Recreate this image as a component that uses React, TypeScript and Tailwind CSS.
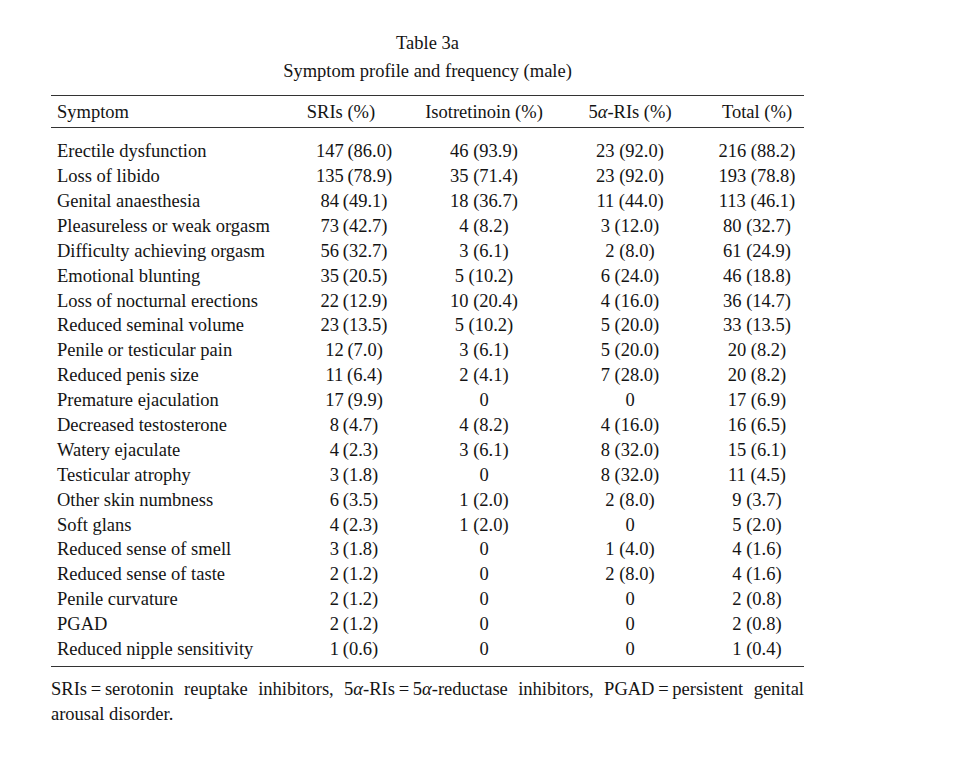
import React from 'react';

type Row = [string, string, string, string, string];

const rows: Row[] = [
  ['Erectile dysfunction', '147\u2009(86.0)', '46 (93.9)', '23 (92.0)', '216 (88.2)'],
  ['Loss of libido', '135\u2009(78.9)', '35 (71.4)', '23 (92.0)', '193 (78.8)'],
  ['Genital anaesthesia', '84\u2009(49.1)', '18 (36.7)', '11 (44.0)', '113 (46.1)'],
  ['Pleasureless or weak orgasm', '73\u2009(42.7)', '4 (8.2)', '3 (12.0)', '80 (32.7)'],
  ['Difficulty achieving orgasm', '56\u2009(32.7)', '3 (6.1)', '2 (8.0)', '61 (24.9)'],
  ['Emotional blunting', '35\u2009(20.5)', '5 (10.2)', '6 (24.0)', '46 (18.8)'],
  ['Loss of nocturnal erections', '22\u2009(12.9)', '10 (20.4)', '4 (16.0)', '36 (14.7)'],
  ['Reduced seminal volume', '23\u2009(13.5)', '5 (10.2)', '5 (20.0)', '33 (13.5)'],
  ['Penile or testicular pain', '12\u2009(7.0)', '3 (6.1)', '5 (20.0)', '20 (8.2)'],
  ['Reduced penis size', '11\u2009(6.4)', '2 (4.1)', '7 (28.0)', '20 (8.2)'],
  ['Premature ejaculation', '17\u2009(9.9)', '0', '0', '17 (6.9)'],
  ['Decreased testosterone', '8\u2009(4.7)', '4 (8.2)', '4 (16.0)', '16 (6.5)'],
  ['Watery ejaculate', '4\u2009(2.3)', '3 (6.1)', '8 (32.0)', '15 (6.1)'],
  ['Testicular atrophy', '3\u2009(1.8)', '0', '8 (32.0)', '11 (4.5)'],
  ['Other skin numbness', '6\u2009(3.5)', '1 (2.0)', '2 (8.0)', '9 (3.7)'],
  ['Soft glans', '4\u2009(2.3)', '1 (2.0)', '0', '5 (2.0)'],
  ['Reduced sense of smell', '3\u2009(1.8)', '0', '1 (4.0)', '4 (1.6)'],
  ['Reduced sense of taste', '2\u2009(1.2)', '0', '2 (8.0)', '4 (1.6)'],
  ['Penile curvature', '2\u2009(1.2)', '0', '0', '2 (0.8)'],
  ['PGAD', '2\u2009(1.2)', '0', '0', '2 (0.8)'],
  ['Reduced nipple sensitivity', '1\u2009(0.6)', '0', '0', '1 (0.4)'],
];

const cols = 'grid grid-cols-[239px_128px_132px_160px_94px]';

export default function App() {
  return (
    <div
      className="min-h-[770px] w-[967px] bg-white text-[#141414] text-[18.5px]"
      style={{ fontFamily: '"Liberation Serif", "Times New Roman", serif' }}
    >
      <div className="ml-[51px] w-[753px] pt-[29px]">
        {/* Caption */}
        <div className="text-center leading-[28px]">
          <div>Table 3a</div>
          <div>Symptom profile and frequency (male)</div>
        </div>

        {/* Header */}
        <div className="mt-[10px] border-t border-b border-[#333]">
          <div className={`${cols} h-[31px] items-center pt-[3px]`}>
            <div className="pl-[6px]">Symptom</div>
            <div className="text-center pr-[26px]">SRIs (%)</div>
            <div className="text-center">Isotretinoin (%)</div>
            <div className="text-center">
              5<i>α</i>-RIs (%)
            </div>
            <div className="text-center">Total (%)</div>
          </div>
        </div>

        {/* Body */}
        <div className="pt-[11px] pb-[4px] border-b border-[#333]">
          {rows.map((r) => (
            <div key={r[0]} className={`${cols} h-[24.9px] items-center leading-none`}>
              <div className="pl-[6px] whitespace-nowrap">{r[0]}</div>
              <div className="text-center">{r[1]}</div>
              <div className="text-center">{r[2]}</div>
              <div className="text-center">{r[3]}</div>
              <div className="text-center">{r[4]}</div>
            </div>
          ))}
        </div>

        {/* Footnote */}
        <p className="mt-[10px] text-justify leading-[25px]">
          SRIs{'\u2009'}={'\u2009'}serotonin reuptake inhibitors, 5<i>α</i>-RIs{'\u2009'}={'\u2009'}5<i>α</i>-reductase
          inhibitors, PGAD{'\u2009'}={'\u2009'}persistent genital arousal disorder.
        </p>
      </div>
    </div>
  );
}
